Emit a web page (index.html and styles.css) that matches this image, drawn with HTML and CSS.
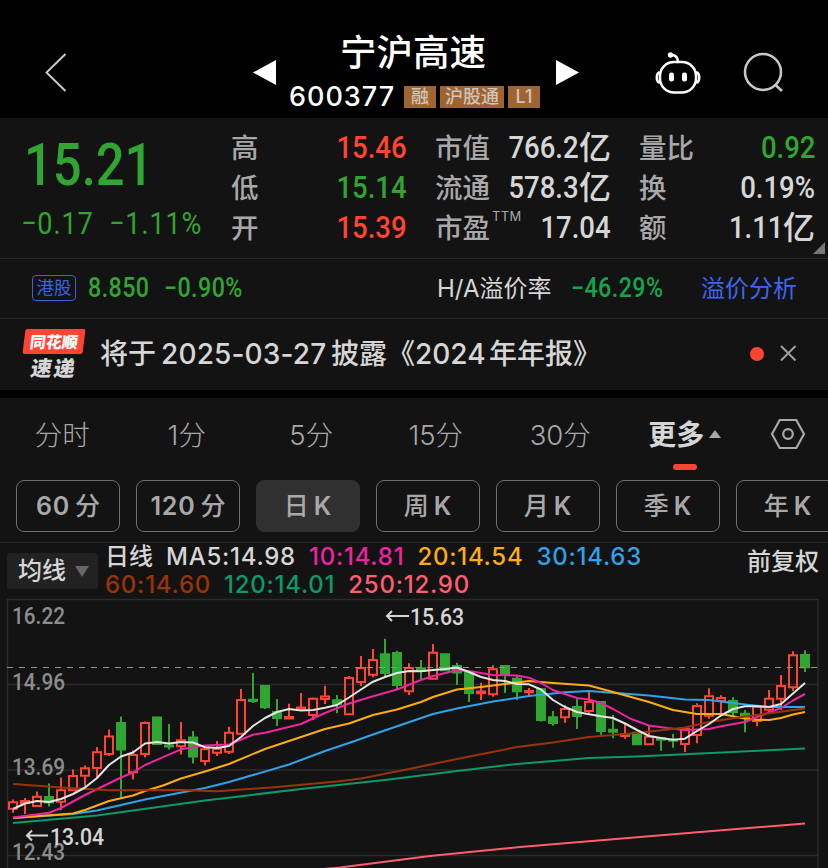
FILE: index.html
```html
<!DOCTYPE html>
<html lang="zh-CN">
<head>
<meta charset="utf-8">
<title>宁沪高速 600377</title>
<link rel="stylesheet" href="styles.css">
</head>
<body>
<header class="top">
  <svg class="back" width="24" height="40" viewBox="0 0 24 40"><path d="M21.500 2L2.500 20.500L21.500 39"/></svg>
  <svg class="prev" width="24" height="26" viewBox="0 0 24 26"><path d="M23 0V25L0 12.500z"/></svg>
  <div class="title">
    <h1>宁沪高速</h1>
    <div class="code"><span class="num">600377</span><i>融</i><i>沪股通</i><i>L1</i></div>
  </div>
  <svg class="next" width="24" height="26" viewBox="0 0 24 26"><path d="M0 0V25L23 12.500z"/></svg>
  <svg class="robot" width="48" height="44" viewBox="0 0 48 44">
    <path d="M16 4C20 4 23 6 23 11" class="ln"/><circle cx="15.500" cy="4" r="2.700" class="fl"/>
    <rect x="5" y="11" width="36" height="30.500" rx="14" class="ln"/>
    <path d="M4 21.500Q1.800 22.500 1.800 26.500T4 31.500M42 21.500Q44.200 22.500 44.200 26.500T42 31.500" class="ln"/>
    <rect x="14" y="21.500" width="5" height="9" rx="2.300" class="fl"/><rect x="27" y="21.500" width="5" height="9" rx="2.300" class="fl"/>
  </svg>
  <svg class="search" width="42" height="42" viewBox="0 0 42 42"><circle cx="20" cy="20" r="18"/><path d="M32.500 33L39 39"/></svg>
</header>

<section class="quote">
  <div class="price">
    <div class="last"><span class="din">15.21</span></div>
    <div class="chg"><span class="din d1">−0.17</span><span class="din d2">−1.11%</span></div>
  </div>
  <div class="stats">
    <p><span>高</span><b class="din red">15.46</b></p>
    <p><span>市值</span><b><b class="din">766.2</b>亿</b></p>
    <p><span>量比</span><b class="din green">0.92</b></p>
    <p><span>低</span><b class="din green">15.14</b></p>
    <p><span>流通</span><b><b class="din">578.3</b>亿</b></p>
    <p><span>换</span><b class="din">0.19%</b></p>
    <p><span>开</span><b class="din red">15.39</b></p>
    <p><span class="pe">市盈<sup>TTM</sup></span><b class="din">17.04</b></p>
    <p><span>额</span><b><b class="din">1.11</b>亿</b></p>
  </div>
  <div class="corner"></div>
</section>

<section class="hk">
  <span class="hktag">港股</span>
  <span class="din h1">8.850</span>
  <span class="din h2">−0.90%</span>
  <span class="ha">H/A溢价率</span>
  <span class="din h3">−46.29%</span>
  <a class="link">溢价分析</a>
</section>

<section class="notice">
  <div class="logo"><span class="l1"><em>同花顺</em></span><span class="l2">速递</span></div>
  <div class="msg"><span>将于</span><span class="n1">2025-03-27</span><span class="n3">披露《</span><span class="n2">2024</span><span>年年报》</span></div>
  <span class="dot"></span>
  <svg class="close" width="18" height="18" viewBox="0 0 18 18"><path d="M1 1L15.500 15.500M15.500 1L1 15.500"/></svg>
</section>

<nav class="tabs">
  <span>分时</span><span>1分</span><span>5分</span><span>15分</span><span>30分</span>
  <span class="on">更多<svg width="12" height="9" viewBox="0 0 12 9"><path d="M6 0L12 8H0z"/></svg></span>
  <svg class="gear" width="36" height="32" viewBox="0 0 36 32"><path d="M9.700 2H26.300L34 16L26.300 30H9.700L2 16z"/><circle cx="18" cy="16" r="4.800"/></svg>
</nav>

<div class="periods">
  <span>60<u>分</u></span><span>120<u>分</u></span><span class="sel"><u>日</u>K</span><span><u>周</u>K</span><span><u>月</u>K</span><span><u>季</u>K</span><span><u>年</u>K</span>
</div>

<div class="legend">
  <div class="drop">均线<svg width="14" height="11" viewBox="0 0 14 11"><path d="M0 0H14L7 11z"/></svg></div>
  <div class="ma">
    <div><span class="cj">日线</span><span class="m5">MA5:14.98</span><span class="m10">10:14.81</span><span class="m20">20:14.54</span><span class="m30">30:14.63</span></div>
    <div><span class="m60">60:14.60</span><span class="m120">120:14.01</span><span class="m250">250:12.90</span></div>
  </div>
  <span class="adj">前复权</span>
</div>

<svg id="chart" class="chart" width="828" height="270" viewBox="0 598 828 270"></svg>
<script src="app.js"></script>
</body>
</html>
```
FILE: styles.css
```css
* { box-sizing: border-box; margin: 0; padding: 0; }
html, body { width: 828px; height: 868px; overflow: hidden; }
body { background: #131313; color: #d6d6d6; font-family: Inter, "Noto Sans CJK SC", sans-serif; }
svg { display: block; flex: none; }
b, i, em, u { font-weight: inherit; font-style: normal; text-decoration: none; }

.din { font-family: Roboto, sans-serif; font-weight: 500; display: inline-block; transform: scaleX(.86); transform-origin: left center; white-space: nowrap; }
.red { color: #ff4433; }
.green { color: #30a532; }

.top { height: 118px; background: #000; display: flex; align-items: flex-start; padding-left: 44px; }
.back { margin-top: 52px; }
.back path { fill: none; stroke: #c8c8c8; stroke-width: 2; }
.prev { margin: 60px 0 0 185px; fill: #fff; }
.title { width: 280px; margin-top: 28px; }
.title h1 { font: 500 36.500px/46px "Noto Sans CJK SC", sans-serif; color: #fff; text-align: center; width: 272px; }
.code { display: flex; gap: 4px; margin: 12px 0 0 12px; height: 22px; }
.code .num { font-size: 27px; font-weight: 500; line-height: 22px; color: #fff; width: 111px; letter-spacing: 1px; }
.code i { background: #a06432; color: #cfc5bc; font-size: 18px; font-weight: 500; line-height: 21px; padding: 0 5px; min-width: 32px; text-align: center; height: 22px; }
.next { margin: 60px 0 0 -1px; fill: #fff; }
.robot { margin: 51px 0 0 75px; }
.robot .ln { fill: none; stroke: #fff; stroke-width: 2.500; stroke-linecap: round; }
.robot .fl { fill: #fff; }
.search { margin: 52px 0 0 40px; fill: none; stroke: #c8c8c8; stroke-width: 2.500; }

.quote { height: 141px; border-bottom: 1px solid #262626; display: flex; position: relative; }
.price { width: 231px; color: #30a532; }
.last { font-size: 59px; line-height: 60px; padding: 16px 0 0 24px; height: 86px; }
.chg { font-size: 31.500px; line-height: 40px; padding-left: 21px; display: flex; }
.chg .din { font-weight: 400; letter-spacing: 1px; }
.chg .d1 { width: 88px; }
.stats { display: grid; grid-template-columns: repeat(3, 176px); grid-auto-rows: 40px; column-gap: 28px; padding-top: 10px; }
.stats p { display: flex; justify-content: space-between; align-items: center; font-size: 27.500px; font-weight: 500; line-height: 40px; color: #a8a8a8; white-space: nowrap; }
.stats p > b { color: #d6d6d6; font-size: 32px; }
.stats .din { font-size: 32px; transform-origin: right center; transform: translateY(-1px) scaleX(.86); }
.stats p > b.red { color: #ff4433; }
.stats p > b.green { color: #30a532; }
.pe { display: flex; }
.pe sup { font-size: 13px; font-weight: 400; line-height: 18px; letter-spacing: .3px; margin: -1px -32px 0 2px; }
.corner { position: absolute; right: 3px; bottom: 4px; border-left: 12px solid transparent; border-bottom: 12px solid #777; }

.hk { height: 60px; border-bottom: 1px solid #262626; display: flex; align-items: center; padding-left: 32px; font-size: 24px; white-space: nowrap; }
.hktag { width: 44px; height: 26px; margin-top: -2px; border: 1px solid #3a63e0; border-radius: 4px; color: #3a63e0; font-size: 17.500px; line-height: 23px; text-align: center; }
.hk .din { font-size: 27px; color: #30a532; margin-top: -2px; letter-spacing: .5px; }
.hk .h1 { margin-left: 12px; width: 76px; }
.hk .h2 { width: 273px; }
.hk .ha { width: 134px; margin-top: -4px; }
.hk .h3 { color: #17a34c; width: 130px; }
.link { color: #3f66f0; font-size: 24px; margin-top: -4px; }

.notice { height: 71px; display: flex; align-items: center; padding-left: 24px; }
.logo { width: 60px; height: 52px; margin-top: 0; }
.l1 { display: block; height: 25px; background: #ff4433; border-radius: 2px; transform: skewX(-7deg); color: #fff; font: 900 16px/24px "Noto Sans CJK SC", sans-serif; text-align: center; }
.l2 { display: block; font: 900 21px/27px "Noto Sans CJK SC", sans-serif; letter-spacing: 2px; padding-left: 7px; transform: skewX(-9deg); color: #d6d6d6; }
.msg { display: flex; font-size: 28px; font-weight: 500; line-height: 40px; margin: -1px 0 0 16px; width: 650px; white-space: nowrap; }
.msg .n1 { width: 169px; margin-left: 5px; letter-spacing: .15px; }
.msg .n3 { margin-left: 1px; }
.msg .n2 { width: 74px; }
.dot { width: 14px; height: 14px; border-radius: 50%; background: #ff4433; margin-top: -1px; }
.close { margin: -1px 0 0 16px; fill: none; stroke: #a0a0a0; stroke-width: 2; }

.tabs { height: 90px; border-top: 8px solid #000; display: flex; align-items: flex-start; }
.tabs span { width: 124.500px; text-align: center; font-size: 27.500px; font-weight: 300; line-height: 74px; height: 73px; color: #a8a8a8; }
.tabs .on { position: relative; font-weight: 700; font-size: 28px; line-height: 72px; color: #d6d6d6; display: flex; justify-content: center; align-items: center; gap: 5px; fill: #a8a8a8; }
.tabs .on::after { content: ""; position: absolute; left: 50px; bottom: 1px; width: 24px; height: 6px; border-radius: 3px; background: #ff4433; }
.gear { margin: 20px 0 0 23px; fill: none; stroke: #a8a8a8; stroke-width: 2.200; }

.periods { display: flex; gap: 16px; padding-left: 16px; height: 63px; border-bottom: 1px solid #262626; }
.periods span { flex: none; width: 104px; height: 52px; border: 1px solid #6e6e6e; border-radius: 8px; color: #a8a8a8; font-size: 25px; font-weight: 600; letter-spacing: .8px; display: flex; align-items: center; justify-content: center; gap: 5px; }
.periods u { font-size: 25px; font-weight: 500; line-height: 48px; letter-spacing: 0; }
.periods .sel { background: #303030; border-color: #303030; }

.legend { height: 55px; display: flex; padding-left: 7px; white-space: nowrap; }
.drop { width: 91px; height: 36px; margin-top: 10px; background: #222; border-radius: 3px; font-size: 24px; font-weight: 500; line-height: 34px; padding-left: 11px; display: flex; align-items: center; gap: 9px; fill: #666; }
.ma { margin-left: 7px; width: 642px; font-size: 24px; font-weight: 500; }
.ma div { display: flex; height: 28px; line-height: 28px; gap: 13px; letter-spacing: .75px; }
.ma .cj { letter-spacing: 0; font-weight: 500; }
.m10 { color: #ec25a2; } .m20 { color: #ffac12; } .m30 { color: #2fa2ea; }
.m60 { color: #993406; } .m120 { color: #0b9a68; } .m250 { color: #ff5d70; }
.adj { font-size: 24px; font-weight: 500; line-height: 37px; }

.chart { overflow: hidden; }
.chart text { font-family: Roboto, sans-serif; font-size: 24.500px; font-weight: 500; fill: #8c8c8c; }
.chart text.mark { fill: #d6d6d6; }
.chart .ar { fill: none; stroke: #d6d6d6; stroke-width: 2; }
.grid { fill: none; stroke: #2b2b2b; stroke-width: 1.500; }
.now { stroke: #a78f64; stroke-width: 1; stroke-dasharray: 6 6; }
.up { fill: none; stroke: #ff4433; stroke-width: 2; }
.down { fill: #30a532; stroke: #30a532; stroke-width: 2; }
.line { fill: none; stroke-width: 2; stroke-linejoin: round; }
```
FILE: app.js
```js
// Candles: direction, body top, body bottom, wick top, wick bottom
const candles = `r 802.3 808.7 799.5 812.7|r 801 803 798 814|r 796.7 806 791.5 807|g 796 803.5 783.5 806.5|r 790.3 801.7 777.5 810|r 776 790.3 769.5 791|r 768.3 775.7 765.5 786|r 752.3 768 747 778|r 736.5 754 729.5 756|g 722 750.5 716.5 797.5|r 755 772.3 750.5 779.5|r 723 754 721.5 757.5|g 716.5 745 716.5 745|g 744.5 747.5 724 749.5|r 740.3 746.3 722 754.5|g 736.5 757.5 731 763.5|r 749.3 761 747 765.5|r 749 752.7 741 756|r 732.7 751.7 726.7 754|r 700 733.7 689 734|g 698.7 702 672.7 703|g 685 708.3 685 709|g 711 719 699 726|r 717 718.5 703.7 719|r 707.5 709.5 693 711|r 698.7 715 697.5 720|r 696.5 699 685.7 704|g 699.3 705 695 713.3|r 678 714.3 676 715|r 668 682 656 686|r 660 674.7 649 677.3|g 653.3 674 638.7 677.5|g 652 686 650.7 689.5|r 668 691.3 663.3 695|g 667.3 671.7 660 679.7|r 652.7 678.7 644 679|g 653.3 671.3 653.3 671.3|g 665 673.5 662.7 685|g 672 694 672 702|r 691.5 693.3 682.7 700|r 669.3 694.3 665.3 696.7|g 665 676 665 693|g 677.7 692.3 675 700|r 691 692.2 688 696|g 688.3 721 688.3 721.5|g 716.3 724 711 725.7|r 709 717.3 705 722.7|g 706 717 698.7 729|r 702 711 692 714|g 701 732 701 734.7|g 728.7 732.7 715 738.3|r 734.3 736 723.3 738.7|g 731.7 745.3 731.7 745.3|r 736.7 744.3 725 744.3|g 737.3 740.7 737.3 750.7|g 739.3 741.3 734 747.7|r 729 744 728 752|r 706 735 703.3 743.3|r 696.3 715.7 688.3 718.7|r 698 701 695.3 714.7|g 700 713.3 697.3 716|g 712.7 718.7 710 732.3|r 706.7 721 706.7 726.3|r 698.7 709.7 690 713.3|r 686 698.7 675 710|r 655.3 687.3 651.3 691|g 654 668.3 650.3 672`.split('|').map(c => c.split(' '));

const lines = {
  '#ff5d70': '300,871 340,867.5 430,856 520,847 640,837 805,823.5',
  '#0b9a68': '13,823 97,815.5 205,800.5 301,789 385,780 457,771 517,764 589,758 637,756.5 805,748.5',
  '#2fa2ea': '13,818 73,814 97,810.5 145,799.5 205,788 229,782 289,764.5 325,751 349,743 373,734.5 433,714 457,708.5 493,701.5 529,696 565,692.3 589,691 649,695.5 685,699.5 709,700 745,704.5 769,707 805,707',
  '#ffac12': '13,818 73,813.5 85,810 109,801 133,795.5 145,791 163,785.5 181,778.5 205,771.5 229,764 265,749 301,737 325,729 349,723.5 373,715 397,709.5 421,702 433,697 457,689.5 481,687 505,684 529,681 553,683 589,685.5 613,692 649,702 673,710 697,714 721,714 745,718.5 757,719.7 769,720 781,718 793,714.5 805,712',
  '#ec25a2': '13,817.5 49,812.7 61,808 85,795 121,777.5 133,772.5 145,765 181,749.3 205,745.5 229,744.5 253,734.7 265,732.7 301,724 325,713 349,703.5 373,696.3 397,689.5 421,680 433,676 457,670.3 469,671 493,675 517,675.5 529,677.7 541,683 553,690 577,698 589,699.5 601,703 613,709 631,719 649,725.5 667,728 685,730 709,729 721,726.3 745,722 757,717 769,712.5 781,708 793,700.5 805,694',
  '#993406': '13,784 61,787.5 109,790.3 181,790 217,791.3 277,787 337,781.5 361,778.5 409,769 457,759 517,747 553,742.5 589,737 637,733 685,727.5 709,722 745,716.5 805,708.5',
};
const ma5 = [809,803.5,801,802,799,794,787.5,778,765,756.5,752.5,743.5,742,743.5,742,742.5,747.3,748,746,737,726,718,712,709,710.5,710,707.7,705,697.5,689.5,681.7,677,673,671,671.3,670,669,667.5,672,677,680,681,684,684.3,689.5,700,707,712,714.3,716.3,718,723.5,730,736,738,739.7,738.7,731,724,715.5,709,706.3,706.3,707,704,693.5,683];
lines['#e4e4e4'] = ma5.map((y, i) => `${13 + 12 * i},${y}`).join(' ');

let out = '<path class="grid" d="M7.500 870V599.500H818V870M8 684.500H818M8 770H818M8 855.500H818"/>';
out += '<g>' + [['16.22', 624], ['14.96', 689.5], ['13.69', 774.5], ['12.43', 860]]
  .map(([t, y]) => `<text x="12" y="${y}" textLength="53" lengthAdjust="spacingAndGlyphs">${t}</text>`).join('') + '</g>';
candles.forEach(([dir, ...v], i) => {
  const [a, b, h, l] = v.map(Number);
  const x = 13 + 12 * i;
  out += dir === 'r'
    ? `<path class="up" d="M${x} ${h}V${a}M${x} ${b}V${l}M${x - 4} ${a}H${x + 4}V${b}H${x - 4}z"/>`
    : `<path class="down" d="M${x} ${h}V${l}M${x - 4} ${a + 1}H${x + 4}V${Math.max(b - 1, a + 1.5)}H${x - 4}z"/>`;
});
out += '<path class="now" d="M7 667.500H818"/>';
for (const color in lines) out += `<polyline class="line" stroke="${color}" points="${lines[color]}"/>`;
out += '<path class="ar" d="M409 616H387M392 611L387 616L392 621M48 835.500H27M32 830.500L27 835.500L32 840.500"/>';
out += '<text class="mark" x="410" y="625" textLength="54" lengthAdjust="spacingAndGlyphs">15.63</text>';
out += '<text class="mark" x="50" y="845" textLength="54" lengthAdjust="spacingAndGlyphs">13.04</text>';
document.getElementById('chart').innerHTML = out;
```
